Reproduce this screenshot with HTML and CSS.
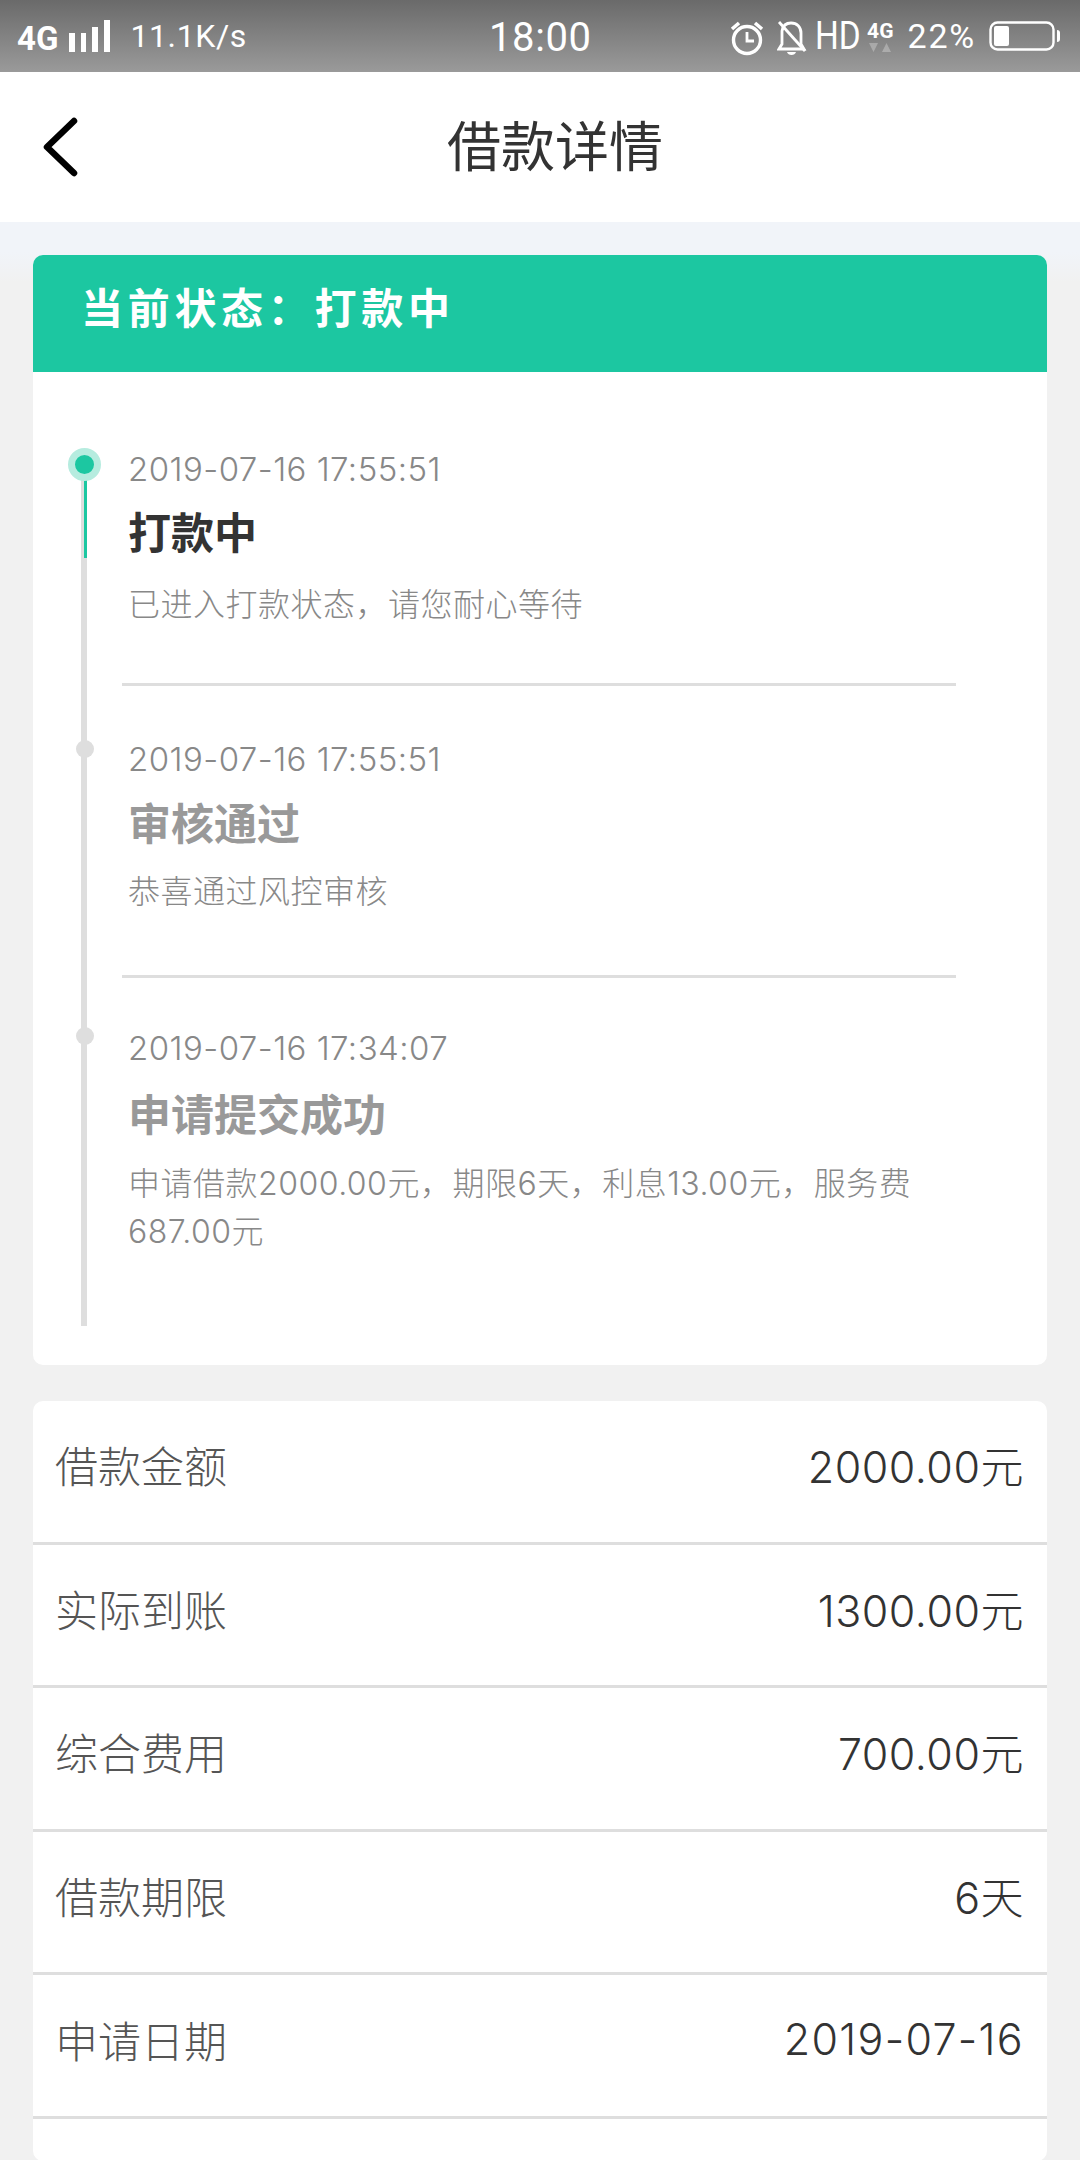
FILE: index.html
```html
<!DOCTYPE html>
<html lang="zh-CN">
<head>
<meta charset="utf-8">
<title>借款详情</title>
<link rel="stylesheet" href="styles.css">
</head>
<body>
<div class="status">
  <div class="st-left">
    <span class="st-net">4G</span>
    <svg class="st-signal" viewBox="0 0 41 32" width="41" height="32"><path d="M0 13h6v19H0zM12 13h5v19h-5zM23 7h6v25h-6zM35 0h6v32h-6z" fill="#fff"/></svg>
    <span class="st-speed">11.1K/s</span>
  </div>
  <div class="st-time">18:00</div>
  <div class="st-right">
    <svg class="st-alarm" viewBox="0 0 34 36" width="34" height="36" fill="none" stroke="#fff"><circle cx="17" cy="20" r="13.5" stroke-width="3.4"/><path d="M17 12v9h7" stroke-width="2.8"/><path d="M2 9 9 3M32 9l-7-6" stroke-width="3.6"/></svg>
    <svg class="st-bell" viewBox="0 0 30 36" width="30" height="36" fill="none" stroke="#fff" stroke-width="2.8"><path d="M5 11C6 5 10 3 14 3c6 0 10 4 10 10v11l3 5H2l3-5z"/><path d="M2 2l26 29" stroke-width="2.8"/><path d="M10 32c1 4 8 4 9 0z" fill="#fff" stroke="none"/></svg>
    <span class="st-hd">HD</span>
    <span class="st-mini">
      <span class="st-mini-text">4G</span>
      <svg class="st-arrows" viewBox="0 0 24 9" width="24" height="9"><path d="M1 0h9L5.500 9zM14 9h9L18.500 0z" fill="#fff" opacity=".28"/></svg>
    </span>
    <span class="st-pct">22%</span>
    <svg class="st-battery" viewBox="0 0 71 30" width="71" height="30"><rect x="1.500" y="1.500" width="63" height="27" rx="7" fill="none" stroke="#fff" stroke-width="2.400"/><rect x="5" y="5" width="15" height="20" rx="2" fill="#fff"/><path d="M68 9c2 0 3 1 3 3v6c0 2-1 3-3 3z" fill="#fff"/></svg>
  </div>
</div>

<header class="nav">
  <svg class="nav-back" viewBox="0 0 36 62" width="36" height="62" fill="none" stroke="#000" stroke-width="6.500" stroke-linecap="round" stroke-linejoin="round"><path d="M32 5 5 31l27 26"/></svg>
  <h1 class="nav-title">借款详情</h1>
</header>

<main class="page">
  <section class="card">
    <div class="state-head">当前状态：打款中</div>
    <div class="timeline">
      <div class="rail"></div>
      <div class="rail-active"></div>
      <div class="item item-first">
        <span class="dot-active"></span>
        <div class="date">2019-07-16 17:55:51</div>
        <div class="name name-on">打款中</div>
        <div class="desc">已进入打款状态，请您耐心等待</div>
      </div>
      <div class="item">
        <span class="dot"></span>
        <div class="date">2019-07-16 17:55:51</div>
        <div class="name">审核通过</div>
        <div class="desc">恭喜通过风控审核</div>
      </div>
      <div class="item item-last">
        <span class="dot"></span>
        <div class="date">2019-07-16 17:34:07</div>
        <div class="name">申请提交成功</div>
        <div class="desc">申请借款2000.00元，期限6天，利息13.00元，服务费687.00元</div>
      </div>
    </div>
  </section>

  <section class="card detail">
    <div class="row"><span class="row-label">借款金额</span><span class="row-value">2000.00元</span></div>
    <div class="row"><span class="row-label">实际到账</span><span class="row-value">1300.00元</span></div>
    <div class="row"><span class="row-label">综合费用</span><span class="row-value">700.00元</span></div>
    <div class="row"><span class="row-label">借款期限</span><span class="row-value">6天</span></div>
    <div class="row"><span class="row-label">申请日期</span><span class="row-value row-date">2019-07-16</span></div>
  </section>
</main>
</body>
</html>
```

FILE: styles.css
```css
* { box-sizing: border-box; }
html, body { margin: 0; padding: 0; }
body {
  width: 1080px;
  height: 2160px;
  overflow: hidden;
  background: #f1f1f1;
  font-family: Inter, "Noto Sans CJK SC", sans-serif;
  color: #333;
}

.status {
  height: 72px;
  display: flex;
  align-items: center;
  justify-content: space-between;
  position: relative;
  padding: 0 20px 0 18px;
  background: linear-gradient(#6a6a6a, #9a9a9a);
  color: #fff;
  font-family: Roboto, sans-serif;
}
.st-left, .st-right { display: flex; align-items: center; }
.st-net { font-size: 33px; font-weight: 700; line-height: 1; margin-top: 4px; margin-left: -1px; }
.st-signal { margin-left: 11px; }
.st-speed { font-size: 32px; margin-left: 20px; letter-spacing: .6px; line-height: 1; }
.st-time {
  position: absolute;
  left: 489px;
  top: 16px;
  font-size: 40px;
  line-height: 44px;
  letter-spacing: .6px;
}
.st-alarm { margin-top: 3px; }
.st-bell { margin-left: 13px; margin-top: 3px; }
.st-hd { font-size: 38px; margin-left: 8px; transform: scaleX(.88); transform-origin: left; width: 43px; line-height: 1; }
.st-mini { display: flex; flex-direction: column; align-items: center; margin-left: 9px; }
.st-mini-text { font-size: 21px; font-weight: 700; line-height: 20px; }
.st-arrows { margin-top: 2px; }
.st-pct { font-size: 34px; margin-left: 14px; line-height: 1; letter-spacing: 1.800px; }
.st-battery { margin-left: 13px; }

.nav {
  height: 150px;
  background: #fff;
  position: relative;
  display: flex;
  align-items: center;
  justify-content: center;
  padding: 2px 0 0 30px;
}
.nav-back { position: absolute; left: 42px; top: 44px; }
.nav-title { margin: 0; font-size: 54px; font-weight: 400; color: #333; line-height: 1; }

.page {
  padding: 33px 33px 0;
  background: linear-gradient(#f1f4f9 0, #f1f4f9 30px, #f1f1f1 60px);
}
.card { background: #fff; border-radius: 10px; overflow: hidden; }
.state-head {
  height: 117px;
  padding: 30px 0 0 48px;
  background: #1cc7a1;
  color: #fff;
  font-size: 42px;
  font-weight: 700;
  line-height: 48px;
  letter-spacing: 4.700px;
}

.timeline {
  position: relative;
  height: 993px;
  padding: 74px 91px 0 89px;
}
.rail {
  position: absolute;
  left: 48px;
  top: 92px;
  width: 6px;
  height: 862px;
  background: #dedede;
}
.rail-active {
  position: absolute;
  left: 51px;
  top: 92px;
  width: 3px;
  height: 94px;
  background: #1cc7a1;
}
.item {
  position: relative;
  padding: 50px 0 59px 6px;
  border-bottom: 3px solid #dedede;
}
.item-first { padding-top: 0; padding-bottom: 54px; }
.item-first .name { margin-top: 13px; }
.item-first .desc { margin-top: 20px; }
.item-last { border-bottom: 0; padding-top: 47px; }
.item-last .name { margin-top: 16px; }
.item-last .desc { margin-top: 17px; }
.dot {
  position: absolute;
  left: -46px;
  top: 54px;
  width: 18px;
  height: 18px;
  border-radius: 50%;
  background: #dedede;
}
.item-last .dot { top: 49px; }
.dot-active {
  position: absolute;
  left: -54px;
  top: 2px;
  width: 33px;
  height: 33px;
  border-radius: 50%;
  background: #1cc7a1;
  border: 7px solid #b6ecdf;
}
.date { font-size: 33px; font-weight: 300; line-height: 46px; color: #888; letter-spacing: .45px; }
.name { margin-top: 14px; font-size: 43px; font-weight: 700; line-height: 56px; color: #999; }
.name-on { color: #333; }
.desc { margin-top: 16px; font-size: 32px; font-weight: 300; line-height: 48px; color: #888; letter-spacing: .5px; }

.detail { margin-top: 36px; height: 760px; }
.row {
  height: 143.600px;
  display: flex;
  align-items: center;
  justify-content: space-between;
  padding: 0 23px 14px 22px;
  border-bottom: 3px solid #dedede;
}
.row-label { font-size: 43px; font-weight: 300; color: #555; }
.row-value { font-size: 43px; font-weight: 300; color: #333; letter-spacing: .5px; }
.row-date { letter-spacing: 1.300px; }
```
